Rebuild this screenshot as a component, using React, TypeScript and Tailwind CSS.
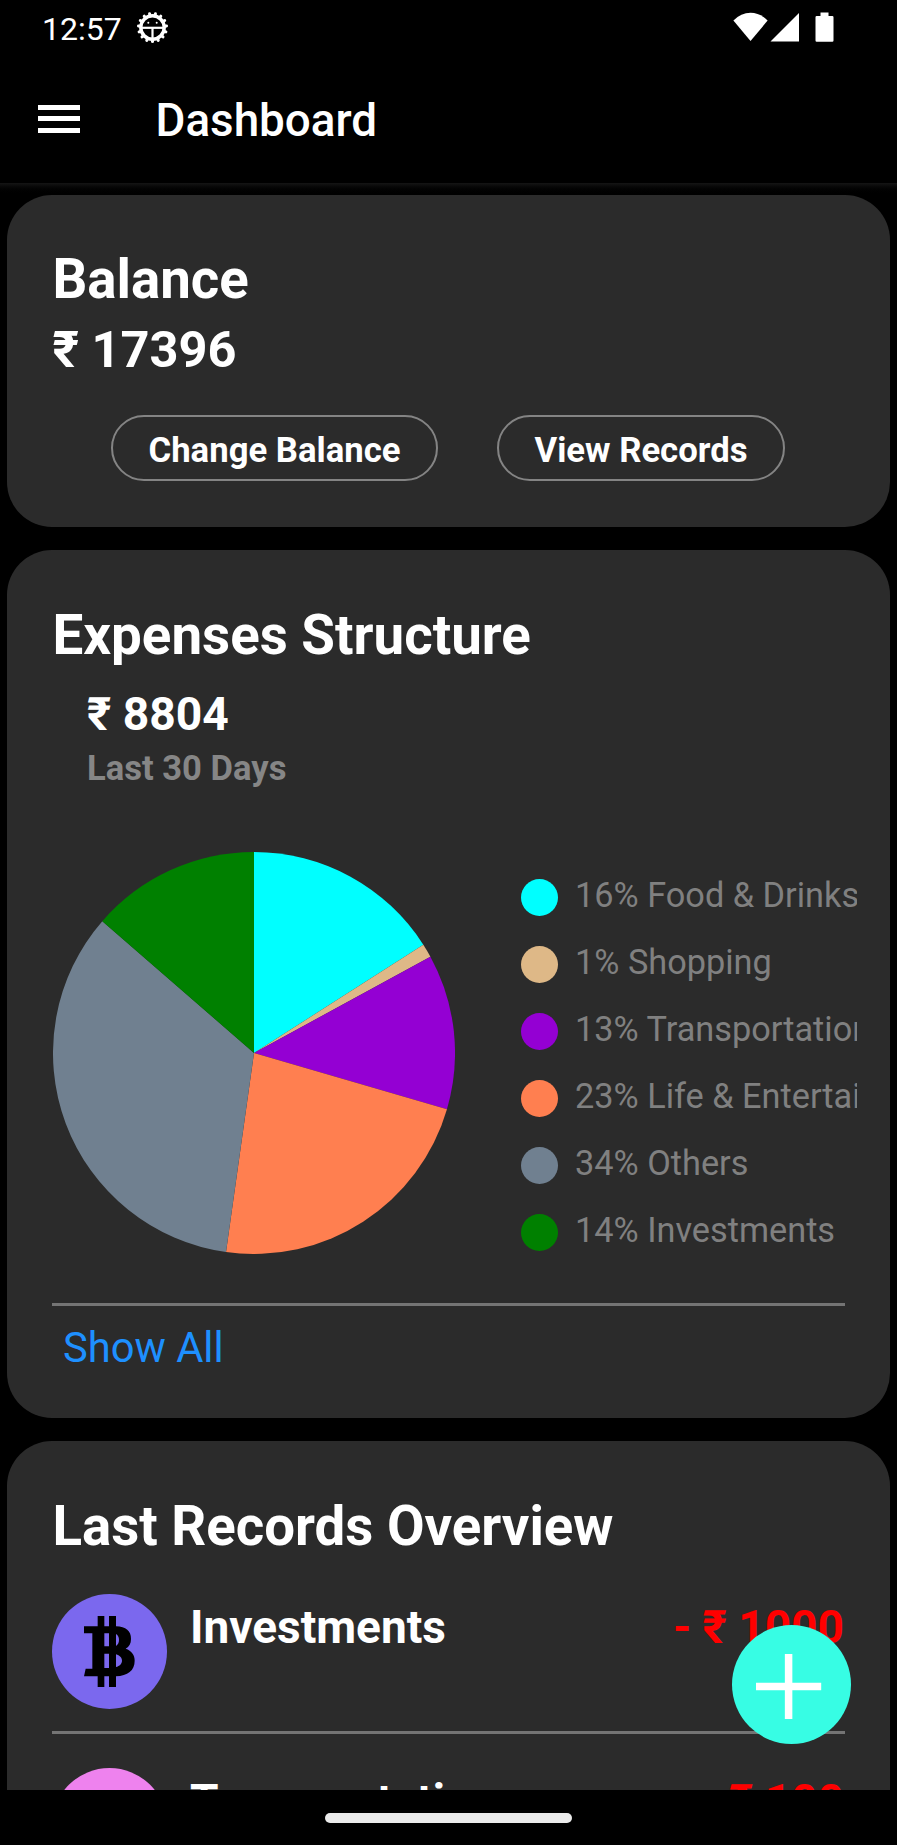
import React from "react";

const legend = [
  { label: "16% Food & Drinks", color: "#00ffff", end: 57.4 },
  { label: "1% Shopping", color: "#deb887", end: 61.35 },
  { label: "13% Transportation", color: "#9400d3", end: 106.25 },
  { label: "23% Life & Entertainment", color: "#ff7f50", end: 188 },
  { label: "34% Others", color: "#708090", end: 311 },
  { label: "14% Investments", color: "#008000", end: 360 },
];

function StatusBar() {
  const teeth = Array.from({ length: 15 }, (_, i) => i * 24 + 12);
  return (
    <div className="flex h-[60px] justify-between pl-[42px] pr-[63px]">
      <div className="flex">
        <span className="mt-[10px] w-[94px] text-[32px] leading-[38px]">12:57</span>
        <svg className="mt-[11px] h-[33px] w-[33px]" viewBox="0 0 33 33" fill="none" stroke="#fff">
          <circle cx="16.5" cy="16.5" r="11.7" strokeWidth="3.4" />
          {teeth.map((a) => (
            <path key={a} d="M16.5 4.5V2.4" strokeWidth="3" strokeLinecap="round" transform={`rotate(${a} 16.5 16.5)`} />
          ))}
          <path d="M5 16.8H28" strokeWidth="2.2" />
          <path d="M16.5 17V30" strokeWidth="2.2" />
          <circle cx="12.3" cy="11.8" r="1" fill="#fff" stroke="none" />
          <circle cx="20.7" cy="11.8" r="1" fill="#fff" stroke="none" />
        </svg>
      </div>
      <svg className="mt-[12px] h-[31px] w-[102px]" viewBox="732 12 102 31" fill="#fff">
        <path d="M733.4 20.6Q741 12.8 750.5 12.8T767.6 20.6L750.5 41Z" />
        <path d="M770.5 41.5H799V13Z" />
        <path d="M820.5 12.4H828.5V16H832.3Q833.5 16 833.5 17.2V40.6Q833.5 41.8 832.3 41.8H816.7Q815.5 41.8 815.5 40.6V17.2Q815.5 16 816.7 16H820.5Z" />
      </svg>
    </div>
  );
}

function Toolbar() {
  return (
    <div className="flex h-[123px] pl-[38px]">
      <div className="mt-[45px] flex w-[42px] flex-col gap-[6.3px]">
        <span className="h-[5px] bg-white" />
        <span className="h-[5px] bg-white" />
        <span className="h-[5px] bg-white" />
      </div>
      <h1 className="ml-[75.5px] mt-[34px] text-[45.8px] font-medium leading-[54px]">Dashboard</h1>
    </div>
  );
}

function Pie() {
  const point = (deg: number) => {
    const r = (deg * Math.PI) / 180;
    return `${201 + 201 * Math.sin(r)} ${201 - 201 * Math.cos(r)}`;
  };
  return (
    <svg className="ml-[0.5px] h-[402px] w-[402px] shrink-0" viewBox="0 0 402 402">
      {legend.map((s, i) => {
        const start = i === 0 ? 0 : legend[i - 1].end;
        const large = s.end - start > 180 ? 1 : 0;
        return <path key={s.label} fill={s.color} d={`M201 201L${point(start)}A201 201 0 ${large} 1 ${point(s.end)}Z`} />;
      })}
    </svg>
  );
}

function Bitcoin() {
  return (
    <svg className="h-[71px] w-[51px]" viewBox="252 167 153 213">
      <path
        fillRule="evenodd"
        fill="#000"
        d="M252 198H293V167H313V198H327V167H348V198C378 199 393 212 393 236C393 250 388 259 377 265C395 271 404 284 404 301C404 331 383 346 348 348V380H327V348H313V380H293V348H252L257 325H277V219H252ZM313 219V258H327V219ZM348 221V257C354 253 357 247 357 239C357 231 354 225 348 221ZM313 280V323H327V280ZM348 282V320C359 317 366 310 366 301C366 292 359 285 348 282Z"
      />
    </svg>
  );
}

function RecordRow({ name, amount, tint, children }: { name: string; amount: string; tint: string; children?: React.ReactNode }) {
  return (
    <div className="flex h-[140px] border-b-[3px] border-[#747474]">
      <div className={`flex h-[115px] w-[115px] items-center justify-center rounded-full ${tint}`}>{children}</div>
      <span className="ml-[23px] mt-[6px] text-[46px] font-bold leading-[54px]">{name}</span>
      <span className="ml-auto mr-[1px] mt-[6px] whitespace-pre text-[46.1px] font-bold leading-[54px] text-[#ff0000]">{amount}</span>
    </div>
  );
}

export default function App() {
  return (
    <div className="relative flex h-[1845px] w-[897px] flex-col overflow-hidden bg-black font-['Roboto',sans-serif] text-white">
      <StatusBar />
      <Toolbar />
      <main className="flex min-h-0 flex-1 flex-col gap-[23px] overflow-hidden bg-linear-to-b from-[#151515] to-black to-[12px] px-[7px] pt-[12px]">
        <section className="h-[332px] shrink-0 rounded-[45px] bg-[#2b2b2b] px-[45px] pt-[52px]">
          <h2 className="ml-[0.5px] text-[54.6px] font-bold leading-[64px]">Balance</h2>
          <p className="ml-[0.5px] mt-[9px] text-[50.5px] font-bold leading-[59px]">₹ 17396</p>
          <div className="mt-[36px] flex gap-[59px] pl-[59px]">
            <button className="h-[66px] w-[327px] rounded-full border-2 border-[#848484] pt-[4px] text-[34.7px] font-bold leading-none">Change Balance</button>
            <button className="h-[66px] w-[288px] rounded-full border-2 border-[#848484] pt-[4px] text-[34.7px] font-bold leading-none">View Records</button>
          </div>
        </section>

        <section className="h-[868px] shrink-0 rounded-[45px] bg-[#2b2b2b] px-[45px] pt-[53px]">
          <h2 className="ml-[0.5px] text-[54.7px] font-bold leading-[64px]">Expenses Structure</h2>
          <p className="ml-[35px] mt-[20px] text-[46.2px] font-bold leading-[54px]">₹ 8804</p>
          <p className="ml-[35px] mt-[7px] text-[34.6px] font-bold leading-[40px] text-[#868686]">Last 30 Days</p>
          <div className="mt-[64px] flex h-[402px]">
            <Pie />
            <ul className="ml-[66.5px] mt-[14px] h-[402px] w-[335.5px] shrink-0 overflow-hidden">
              {legend.map((s) => (
                <li key={s.label} className="flex h-[67px] items-center">
                  <span className="mt-[-5px] h-[37px] w-[37px] shrink-0 rounded-full" style={{ background: s.color }} />
                  <span className="ml-[17px] mt-[-9px] whitespace-nowrap text-[34.3px] leading-[40px] text-[#808080]">{s.label}</span>
                </li>
              ))}
            </ul>
          </div>
          <div className="mt-[49px] h-[3px] w-[793px] bg-[#747474]" />
          <a className="ml-[11px] mt-[18px] block text-[41.7px] leading-[48px] text-[#1e90ff]">Show All</a>
        </section>

        <section className="h-[520px] shrink-0 rounded-t-[45px] bg-[#2b2b2b] px-[45px] pt-[53px]">
          <h2 className="ml-[0.5px] text-[54.6px] font-bold leading-[64px]">Last Records Overview</h2>
          <div className="mt-[36px] flex w-[793px] flex-col gap-[34px]">
            <RecordRow name="Investments" amount="- ₹ 1000" tint="bg-[#7b68ee]">
              <Bitcoin />
            </RecordRow>
            <RecordRow name="Transportation" amount="- ₹ 100" tint="bg-[#ee82ee]" />
          </div>
        </section>
      </main>

      <footer className="flex h-[55px] shrink-0 justify-center bg-black pt-[22.5px]">
        <div className="h-[10px] w-[247px] rounded-full bg-[#ebebeb]" />
      </footer>

      <button className="absolute left-[732px] top-[1625px] h-[119px] w-[119px] rounded-full bg-[#37fde4]">
        <svg className="h-full w-full" viewBox="0 0 119 119" stroke="#fff" strokeWidth="7.5">
          <path d="M24 61.5H89.2M56.6 29V94" />
        </svg>
      </button>
    </div>
  );
}
